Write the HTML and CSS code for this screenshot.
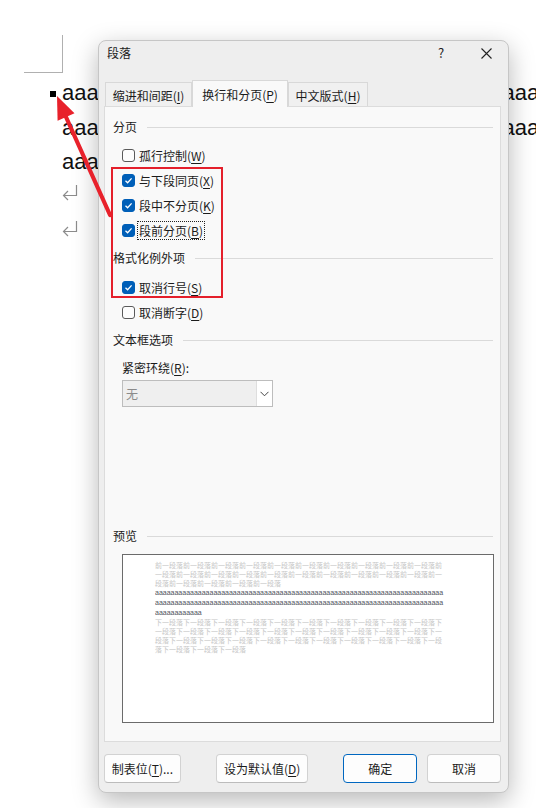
FILE: index.html
```html
<!DOCTYPE html>
<html lang="zh-CN">
<head>
    <meta charset="UTF-8">
    <title>段落</title>
    <link rel="stylesheet" href="styles.css">
</head>
<body>
    <div class="doc">
        <div class="corner"></div>
        <div class="text">
            <div class="line"><span class="mark"></span>aaaaaaaaaaaaaaaaaaaaaaaaaaaaaaaaaaaaaaaa</div>
            <div class="line">aaaaaaaaaaaaaaaaaaaaaaaaaaaaaaaaaaaaaaaa</div>
            <div class="line">aaaaaa</div>
        </div>
        <div class="rets">
            <div class="ret"><svg width="16" height="17" viewBox="0 0 16 17"><path d="M14.5 1V11.5H1.5M6 7L1.5 11.5L6 16" fill="none" stroke="#8c8c8c" stroke-width="1.2"/></svg></div>
            <div class="ret"><svg width="16" height="17" viewBox="0 0 16 17"><path d="M14.5 1V11.5H1.5M6 7L1.5 11.5L6 16" fill="none" stroke="#8c8c8c" stroke-width="1.2"/></svg></div>
        </div>
    </div>

    <div class="dialog">
        <div class="titlebar">
            <span class="title">段落</span>
            <span class="tb-btn help">?</span>
            <span class="tb-btn close"><svg width="11" height="11" viewBox="0 0 11 11"><path d="M0.5 0.5L10.5 10.5M10.5 0.5L0.5 10.5" stroke="#222" stroke-width="1.1"/></svg></span>
        </div>
        <div class="tabs">
            <div class="tab t1">缩进和间距(<u>I</u>)</div>
            <div class="tab t2 active">换行和分页(<u>P</u>)</div>
            <div class="tab t3">中文版式(<u>H</u>)</div>
        </div>
        <div class="panel">
            <div class="sec">分页</div>
            <div class="opts first">
                <div class="opt"><span class="box"></span>孤行控制(<u>W</u>)</div>
                <div class="opt"><span class="box on"><svg width="11" height="11" viewBox="0 0 11 11"><path d="M2.5 5.8L4.6 7.8L8.6 3.4" fill="none" stroke="#fff" stroke-width="1.3"/></svg></span>与下段同页(<u>X</u>)</div>
                <div class="opt"><span class="box on"><svg width="11" height="11" viewBox="0 0 11 11"><path d="M2.5 5.8L4.6 7.8L8.6 3.4" fill="none" stroke="#fff" stroke-width="1.3"/></svg></span>段中不分页(<u>K</u>)</div>
                <div class="opt"><span class="box on"><svg width="11" height="11" viewBox="0 0 11 11"><path d="M2.5 5.8L4.6 7.8L8.6 3.4" fill="none" stroke="#fff" stroke-width="1.3"/></svg></span><span class="focus">段前分页(<u>B</u>)</span></div>
            </div>
            <div class="sec mid">格式化例外项</div>
            <div class="opts second">
                <div class="opt"><span class="box on"><svg width="11" height="11" viewBox="0 0 11 11"><path d="M2.5 5.8L4.6 7.8L8.6 3.4" fill="none" stroke="#fff" stroke-width="1.3"/></svg></span>取消行号(<u>S</u>)</div>
                <div class="opt"><span class="box"></span>取消断字(<u>D</u>)</div>
            </div>
            <div class="sec mid">文本框选项</div>
            <div class="field-label">紧密环绕(<u>R</u>):</div>
            <div class="select">
                <span class="val">无</span>
                <span class="dd"><svg width="9" height="6" viewBox="0 0 9 6"><path d="M0.5 0.8L4.5 4.8L8.5 0.8" fill="none" stroke="#444" stroke-width="1"/></svg></span>
            </div>
            <div class="sec preview-title">预览</div>
            <div class="preview">
                <div class="pv">前一段落前一段落前一段落前一段落前一段落前一段落前一段落前一段落前一段落前一段落前</div>
                <div class="pv">一段落前一段落前一段落前一段落前一段落前一段落前一段落前一段落前一段落前一段落前一</div>
                <div class="pv">段落前一段落前一段落前一段落前一段落</div>
                <div class="pa">aaaaaaaaaaaaaaaaaaaaaaaaaaaaaaaaaaaaaaaaaaaaaaaaaaaaaaaaaaaaaaaaaaaaaaaaaa</div>
                <div class="pa">aaaaaaaaaaaaaaaaaaaaaaaaaaaaaaaaaaaaaaaaaaaaaaaaaaaaaaaaaaaaaaaaaaaaaaaaaa</div>
                <div class="pa">aaaaaaaaaaaa</div>
                <div class="pv">下一段落下一段落下一段落下一段落下一段落下一段落下一段落下一段落下一段落下一段落下</div>
                <div class="pv">一段落下一段落下一段落下一段落下一段落下一段落下一段落下一段落下一段落下一段落下一</div>
                <div class="pv">段落下一段落下一段落下一段落下一段落下一段落下一段落下一段落下一段落下一段落下一段</div>
                <div class="pv">落下一段落下一段落下一段落</div>
            </div>
        </div>
        <div class="actions">
            <button class="btn b-tabs">制表位(<u>T</u>)...</button>
            <button class="btn b-default">设为默认值(<u>D</u>)</button>
            <button class="btn b-ok">确定</button>
            <button class="btn b-cancel">取消</button>
        </div>
    </div>

    <div class="highlight"></div>

    <svg class="arrow" width="80" height="140" viewBox="0 0 80 140">
        <path d="M70 130L26 32" stroke="#e8212b" stroke-width="4.2" stroke-linecap="round"/>
        <path d="M17 11L34.5 28.2L17.6 35.8Z" fill="#e8212b"/>
    </svg>
</body>
</html>
```

FILE: styles.css
```css
* {
    box-sizing: border-box;
}
body {
    margin: 0;
    width: 536px;
    height: 808px;
    overflow: hidden;
    position: relative;
    background-color: #fff;
    font-family: "Noto Sans CJK SC", sans-serif;
    color: #1b1b1b;
}
u {
    text-decoration: underline;
    text-underline-offset: 2px;
    text-decoration-thickness: 1px;
}

/* document behind the dialog */
.doc {
    padding: 35px 0 0 24px;
}
.corner {
    width: 39px;
    height: 38px;
    border-right: 1px solid #b0b0b0;
    border-bottom: 1px solid #b0b0b0;
}
.text {
    margin: 3px 0 0 38px;
    font-family: "Liberation Sans", sans-serif;
    font-size: 22px;
    line-height: 34.5px;
    color: #111;
    white-space: nowrap;
}
.mark {
    display: inline-block;
    width: 6px;
    height: 6px;
    background: #000;
    margin-left: -12px;
    margin-right: 6px;
    vertical-align: 3px;
}
.rets {
    margin: -5px 0 0 38px;
}
.ret {
    height: 36px;
    display: flex;
    align-items: center;
}

/* dialog window */
.dialog {
    position: absolute;
    left: 98px;
    top: 40px;
    width: 411px;
    height: 753px;
    background-color: #eeeeee;
    border: 1px solid #c6c6c6;
    border-radius: 8px;
    box-shadow: 0 8px 26px rgba(0, 0, 0, 0.28);
    padding: 0 7px 0 5px;
    font-size: 12px;
}
.titlebar {
    height: 39px;
    display: flex;
    align-items: flex-start;
    padding: 3px 0 0 3px;
    font-size: 12px;
    line-height: 18px;
}
.title {
    flex: 1;
}
.tb-btn {
    width: 30px;
    height: 18px;
    display: flex;
    align-items: center;
    justify-content: center;
}
.help {
    margin-right: 15px;
    font-size: 13px;
    color: #222;
}
.close svg {
    margin-top: 1px;
}

.tabs {
    display: flex;
    align-items: flex-end;
    height: 26px;
    margin-left: 1px;
}
.tab {
    height: 24px;
    border: 1px solid #d8d8d8;
    border-bottom: none;
    background-color: #f0f0f0;
    display: flex;
    align-items: center;
    justify-content: center;
    padding-top: 2px;
    white-space: nowrap;
}
.t1 { width: 87px; }
.t2 { width: 96px; }
.t3 { width: 80px; }
.tab.active {
    height: 27px;
    margin-bottom: -1px;
    background-color: #f9f9f9;
    position: relative;
    z-index: 1;
    padding-top: 0;
}

.panel {
    height: 636px;
    background-color: #f9f9f9;
    border: 1px solid #dcdcdc;
    padding: 11px 7px 0 8px;
}
.sec {
    display: flex;
    align-items: center;
    gap: 10px;
    height: 18px;
    line-height: 18px;
}
.sec::after {
    content: "";
    flex: 1;
    height: 1px;
    background-color: #dadada;
}
.sec.mid {
    margin-top: 6px;
}
.opts.first {
    margin-top: 7px;
}
.opts.second {
    margin-top: 8px;
}
.opt {
    display: flex;
    align-items: center;
    height: 25px;
    padding-left: 9px;
    white-space: nowrap;
}
.box {
    width: 13px;
    height: 13px;
    border: 1px solid #5a5a5a;
    border-radius: 3px;
    background-color: #fdfdfd;
    margin-right: 4px;
    display: flex;
    align-items: center;
    justify-content: center;
    flex-shrink: 0;
}
.box.on {
    background-color: #005fb8;
    border-color: #005fb8;
}
.focus {
    border: 1px dotted #222;
    margin-left: -2px;
    padding: 0 1px;
    line-height: 17px;
}

.field-label {
    margin-top: 10px;
    padding-left: 9px;
    line-height: 18px;
}
.select {
    display: flex;
    width: 151px;
    height: 27px;
    margin: 3px 0 0 9px;
    border: 1px solid #bdbdbd;
    background-color: #efefef;
}
.select .val {
    flex: 1;
    padding-left: 3px;
    line-height: 25px;
    color: #8a8a8a;
}
.select .dd {
    width: 16px;
    background-color: #fff;
    border-left: 1px solid #dedede;
    display: flex;
    align-items: center;
    justify-content: center;
}

.preview-title {
    margin-top: 120px;
}
.preview {
    width: 372px;
    height: 169px;
    margin: 9px 0 0 9px;
    border: 1px solid #6b6b6b;
    background-color: #fff;
    padding: 6px 0 0 32px;
}
.pv {
    font-size: 7px;
    line-height: 9px;
    height: 9px;
    color: #c6c6c6;
    white-space: nowrap;
}
.pa {
    font-family: "Liberation Sans", sans-serif;
    font-size: 7px;
    line-height: 10px;
    height: 10px;
    color: #50535c;
    white-space: nowrap;
    overflow: hidden;
    width: 289px;
}

.actions {
    display: flex;
    margin-top: 12px;
}
.btn {
    height: 29px;
    border: 1px solid #d2d2d2;
    border-bottom-color: #bcbcbc;
    border-radius: 4px;
    background-color: #fdfdfd;
    font-family: "Noto Sans CJK SC", sans-serif;
    font-size: 12px;
    color: #1b1b1b;
    padding: 0;
    white-space: nowrap;
}
.b-tabs { width: 77px; }
.b-default { width: 93px; margin-left: 35px; }
.b-ok { width: 74px; margin-left: 35px; border-color: #0067c0; }
.b-cancel { width: 74px; margin-left: 10px; }

/* annotations drawn over the screenshot */
.highlight {
    position: absolute;
    left: 111px;
    top: 167px;
    width: 112px;
    height: 131px;
    border: 2px solid #e41f2b;
}
.arrow {
    position: absolute;
    left: 40px;
    top: 85px;
}
```
